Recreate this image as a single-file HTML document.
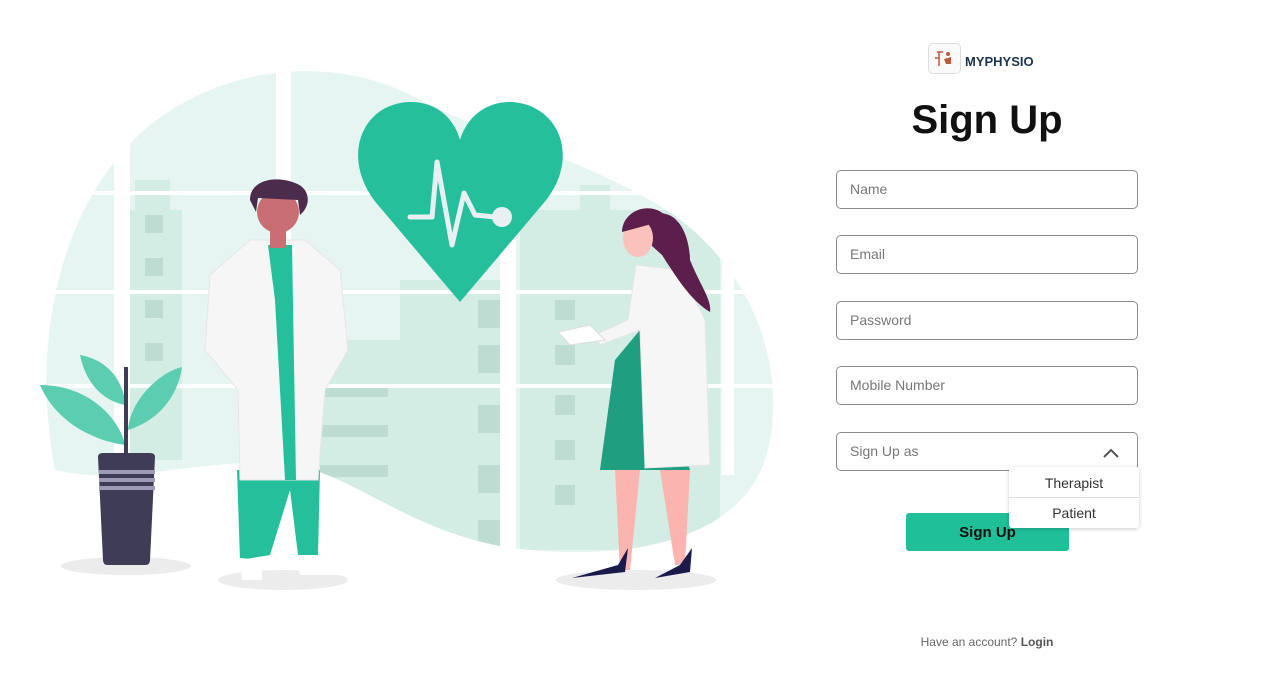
<!DOCTYPE html>
<html><head><meta charset="utf-8"><style>
*{box-sizing:border-box;margin:0;padding:0}
body{width:1280px;height:676px;background:#fff;font-family:"Liberation Sans",sans-serif;position:relative;overflow:hidden}
.in{position:absolute;left:836px;width:302px;height:39px;border:1px solid #8a8a8a;border-radius:5px;font-size:14px;color:#777;padding-left:13px;line-height:37px}
</style></head><body>
<svg width="800" height="676" style="position:absolute;left:0;top:0">
<defs><clipPath id="b"><path d="M55,470 C30,340 60,200 150,125 C230,62 340,55 420,100 C500,140 560,150 650,200 C760,262 790,380 765,460 C735,545 620,560 520,549 C420,537 360,480 300,466 C220,452 130,488 55,470 Z"/></clipPath></defs>
<g clip-path="url(#b)">
<rect x="0" y="0" width="800" height="676" fill="#e6f5f1"/>
<g fill="#d3ece4">
<rect x="135" y="180" width="35" height="280"/><rect x="130" y="210" width="52" height="250"/>
<rect x="320" y="340" width="180" height="210"/><rect x="400" y="280" width="100" height="270"/>
<rect x="520" y="210" width="200" height="340"/><rect x="580" y="185" width="30" height="40"/>
</g>
<g fill="#bfdcd3">
<rect x="145" y="215" width="18" height="18"/><rect x="145" y="258" width="18" height="18"/><rect x="145" y="300" width="18" height="18"/><rect x="145" y="343" width="18" height="18"/>
<rect x="478" y="300" width="22" height="28"/><rect x="478" y="345" width="22" height="28"/><rect x="478" y="405" width="22" height="28"/><rect x="478" y="465" width="22" height="28"/><rect x="478" y="520" width="22" height="28"/>
<rect x="555" y="300" width="20" height="20"/><rect x="555" y="345" width="20" height="20"/><rect x="555" y="395" width="20" height="20"/><rect x="555" y="440" width="20" height="20"/><rect x="555" y="485" width="20" height="20"/>
<rect x="320" y="385" width="68" height="12"/><rect x="320" y="425" width="68" height="12"/><rect x="320" y="465" width="68" height="12"/>
</g>
<g fill="#fff">
<rect x="114" y="130" width="16" height="340"/><rect x="276" y="60" width="15" height="420"/><rect x="500" y="140" width="16" height="420"/><rect x="722" y="255" width="12" height="220"/>
<rect x="40" y="191" width="740" height="4"/><rect x="40" y="290" width="740" height="4"/><rect x="40" y="384" width="740" height="4"/>
</g>
</g>
<path d="M460,302 L378,205 C340,160 360,105 408,102 C440,101 455,122 460,140 C465,122 482,101 512,102 C560,105 582,160 542,205 Z" fill="#25bf9c"/>
<path d="M410,217 L432,217 L437,162 L452,245 L464,193 L475,215 L495,217" fill="none" stroke="#e8f0f4" stroke-width="5" stroke-linejoin="round" stroke-linecap="round"/>
<circle cx="502" cy="217" r="10" fill="#e8f0f4"/>
<ellipse cx="126" cy="566" rx="65" ry="9" fill="#ececec"/><ellipse cx="283" cy="580" rx="65" ry="10" fill="#ececec"/><ellipse cx="636" cy="580" rx="80" ry="10" fill="#ececec"/>
<path d="M40,385 C90,385 120,420 125,445 C90,440 55,420 40,385Z" fill="#5ccdb0"/>
<path d="M80,355 C110,360 125,385 125,405 C100,400 85,380 80,355Z" fill="#5ccdb0"/>
<path d="M182,367 C160,372 130,400 128,430 C160,420 178,395 182,367Z" fill="#5ccdb0"/>
<rect x="124" y="367" width="4" height="90" fill="#3f3d56"/>
<path d="M98,457 Q98,453 103,453 L150,453 Q155,453 155,457 L150,560 Q150,565 145,565 L108,565 Q103,565 103,560Z" fill="#3f3d56"/>
<rect x="99" y="470" width="56" height="4" fill="#9e9cb5"/><rect x="99" y="478" width="56" height="4" fill="#9e9cb5"/><rect x="99" y="486" width="56" height="4" fill="#9e9cb5"/>
<path d="M237,470 L320,470 L318,555 L298,555 L290,490 L270,555 L240,560Z" fill="#25bf9c"/>
<path d="M240,558 L262,560 L262,580 L242,580Z" fill="#fff"/><path d="M296,555 L318,555 L340,575 L300,575Z" fill="#fff"/>
<path d="M250,240 L305,240 L340,270 L348,350 L325,390 L318,480 L240,480 L238,390 L205,350 L210,275Z" fill="#f6f6f6" stroke="#e6e6e6"/>
<path d="M268,245 L292,245 L296,480 L285,480 L275,300Z" fill="#25bf9c"/>
<circle cx="278" cy="212" r="21" fill="#c96e73"/><rect x="270" y="228" width="16" height="20" fill="#c96e73"/>
<path d="M250,200 C250,180 275,175 295,183 C310,188 312,205 300,215 L298,200 L258,198 L256,212Z" fill="#4c2c4c"/>
<path d="M600,470 L615,360 L640,330 L690,470Z" fill="#1f9e80"/>
<path d="M615,470 L640,470 L630,570 L620,570Z M660,470 L690,470 L685,565 L675,565Z" fill="#fbb4b0"/>
<path d="M572,578 L625,572 L628,548 L618,565Z" fill="#1b1b4b"/><path d="M655,578 L690,572 L692,548 L680,565Z" fill="#1b1b4b"/>
<path d="M636,265 L680,270 L705,320 L710,465 L645,468 L640,330 L600,345 L595,335 L628,320Z" fill="#f6f6f6" stroke="#e6e6e6"/>
<path d="M558,332 L590,325 L605,340 L570,345Z" fill="#fff" stroke="#ddd"/>
<path d="M650,215 C680,205 690,240 690,260 C700,285 712,300 710,312 C690,300 675,275 662,255 L640,235 C635,222 640,218 650,215Z" fill="#5c1f4c"/>
<ellipse cx="638" cy="238" rx="15" ry="19" fill="#fbc2bc"/>
<path d="M622,232 C622,212 648,200 665,215 L648,225Z" fill="#5c1f4c"/>
</svg>
<div style="position:absolute;left:928px;top:43px;width:33px;height:31px;border:1px solid #ddd;border-radius:5px;background:#fafafa">
<svg width="31" height="29"><path d="M10,8 L10,22 M10,14 L6,14 M14,8 L8,8" stroke="#c0573a" stroke-width="1.5" fill="none"/><circle cx="19" cy="10" r="2" fill="#c0573a"/><path d="M15,15 L22,13 L22,20 L17,20Z" fill="#c0573a"/></svg></div>
<div style="position:absolute;left:965px;top:54px;font-size:13px;font-weight:bold;color:#1c3350">MYPHYSIO</div>
<div style="position:absolute;left:836px;width:302px;top:98px;text-align:center;font-size:40px;font-weight:bold;color:#111">Sign Up</div>
<div class="in" style="top:170px">Name</div>
<div class="in" style="top:235px">Email</div>
<div class="in" style="top:301px">Password</div>
<div class="in" style="top:366px">Mobile Number</div>
<div class="in" style="top:432px">Sign Up as
<svg width="16" height="10" style="position:absolute;right:18px;top:15px"><path d="M1,9 L8,2 L15,9" fill="none" stroke="#555" stroke-width="2"/></svg></div>
<div style="position:absolute;left:906px;top:513px;width:163px;height:38px;background:#1fbf98;border-radius:3px;text-align:center;line-height:40px;font-weight:bold;font-size:15px;color:#111">Sign Up</div>
<div style="position:absolute;left:1009px;top:467px;width:130px;height:61px;background:#fff;box-shadow:0 1px 4px rgba(0,0,0,.2);border-radius:3px;font-size:14px;color:#333;text-align:center">
<div style="height:31px;line-height:32px;border-bottom:1px solid #ddd">Therapist</div>
<div style="height:30px;line-height:30px">Patient</div></div>
<div style="position:absolute;left:836px;width:302px;top:635px;text-align:center;font-size:12px;color:#666">Have an account? <b style="color:#555">Login</b></div>
</body></html>
